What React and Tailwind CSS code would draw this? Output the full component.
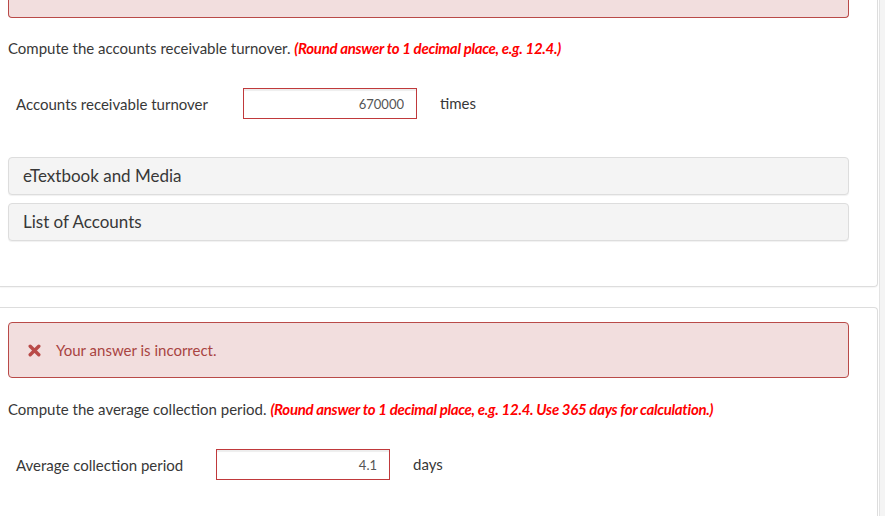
import React from 'react';

function XIcon() {
    return (
        <svg width="13" height="13" viewBox="0 0 13 13" className="shrink-0">
            <path d="M2.2 2.2 L10.8 10.8 M10.8 2.2 L2.2 10.8" stroke="#b94a48" strokeWidth="3.4" strokeLinecap="round" />
        </svg>
    );
}

function AnswerRow({ label, value, unit, labelWidth }) {
    return (
        <div className="flex items-center pl-4">
            <div className={`${labelWidth} text-[15px] text-[#383838] leading-5`}>{label}</div>
            <input
                readOnly
                value={value}
                className="h-[31px] w-[174px] border border-[#c0393b] bg-white pr-3 text-right text-[13px] text-[#555] shadow-[inset_0_2px_1px_rgba(0,0,0,0.07)] outline-none"
                style={{ fontFamily: 'Lato, "Liberation Sans", sans-serif' }}
            />
            <span className="ml-[23px] text-[15px] text-[#383838]">{unit}</span>
        </div>
    );
}

function Question({ text, hint }) {
    return (
        <p className="text-[15px] leading-5 text-[#383838]">
            {text}{' '}
            <span className="font-bold italic text-[#ff0000] tracking-[-0.3px]">{hint}</span>
        </p>
    );
}

export default function App() {
    return (
        <div className="flex h-[516px] w-[885px] overflow-hidden bg-white" style={{ fontFamily: 'Lato, "Liberation Sans", sans-serif' }}>
            <div className="w-[878px]">
                {/* first question card, top is scrolled off */}
                <div className="rounded-br border-r border-b border-[#ddd] pb-[45px] shadow-[0_1px_1px_rgba(0,0,0,0.04)]">
                    <div className="ml-2 h-[18px] w-[841px] rounded-b border-x border-b border-[#b94a48] bg-[#f2dede]" />
                    <div className="mt-[20px] pl-2">
                        <Question
                            text="Compute the accounts receivable turnover."
                            hint="(Round answer to 1 decimal place, e.g. 12.4.)"
                        />
                    </div>
                    <div className="mt-[30px]">
                        <AnswerRow label="Accounts receivable turnover" value="670000" unit="times" labelWidth="w-[227px]" />
                    </div>
                    <div className="ml-2 mt-[38px] flex w-[841px] flex-col gap-2">
                        <div className="flex h-[38px] items-center rounded-sm border border-[#ddd] bg-[#f4f4f4] pl-[14px] text-[17px] text-[#383838] shadow-[0_1px_1px_rgba(0,0,0,0.06)]">
                            eTextbook and Media
                        </div>
                        <div className="flex h-[38px] items-center rounded-sm border border-[#ddd] bg-[#f4f4f4] pl-[14px] text-[17px] text-[#383838] shadow-[0_1px_1px_rgba(0,0,0,0.06)]">
                            List of Accounts
                        </div>
                    </div>
                </div>

                {/* second question card */}
                <div className="mt-[20px] h-[300px] rounded-tr border-t border-r border-[#ddd] pt-[14px]">
                    <div className="ml-2 flex h-[56px] w-[841px] items-center gap-[15px] rounded border border-[#b94a48] bg-[#f2dede] pl-[19px] text-[15px] text-[#a94442]">
                        <XIcon />
                        <span>Your answer is incorrect.</span>
                    </div>
                    <div className="mt-[21px] pl-2">
                        <Question
                            text="Compute the average collection period."
                            hint="(Round answer to 1 decimal place, e.g. 12.4. Use 365 days for calculation.)"
                        />
                    </div>
                    <div className="mt-[30px]">
                        <AnswerRow label="Average collection period" value="4.1" unit="days" labelWidth="w-[200px]" />
                    </div>
                </div>
            </div>
            <div className="ml-px flex-1 border-l border-[#e3e3e3] bg-[#f4f4f4]" />
        </div>
    );
}
